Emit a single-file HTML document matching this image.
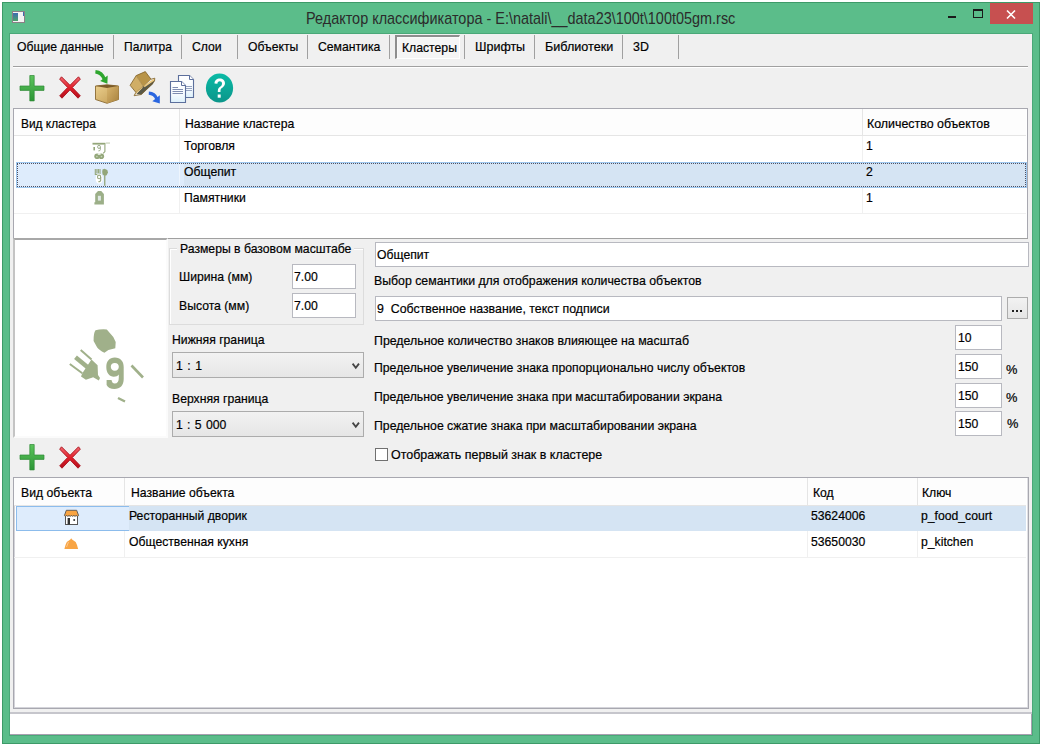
<!DOCTYPE html>
<html><head><meta charset="utf-8">
<style>
*{box-sizing:border-box;margin:0;padding:0}
html,body{width:1042px;height:746px;overflow:hidden;background:#fff}
body{position:relative;font-family:"Liberation Sans",sans-serif;font-size:12.2px;color:#000}
.a{position:absolute}
svg.a{overflow:visible}
.t{position:absolute;white-space:pre;line-height:14px;height:14px;transform-origin:0 0;-webkit-text-stroke:0.2px #000}
.sep{position:absolute;width:1px;background:#a0a0a0}
.hl{position:absolute;height:1px}
.vl{position:absolute;width:1px}
.inp{position:absolute;background:#fff;border:1px solid #b8b9c0}
.combo{position:absolute;border:1px solid #acacac;background:linear-gradient(#f2f2f2,#e6e6e6)}
</style></head><body>
<div class="a" style="left:2px;top:2px;width:1038px;height:742px;background:#5bbd8a;border:1px solid #3d9a68"></div>
<div class="a" style="left:12px;top:11px;width:13px;height:12px;background:#f4f4f4;border:1px solid #8a7f85"></div>
<div class="a" style="left:13px;top:13px;width:5px;height:8px;background:linear-gradient(#3d6bb0,#4aa36a)"></div>
<div class="a" style="left:23px;top:12px;width:1px;height:4px;background:#3d6bb0"></div>
<div class="t" style="left:306px;top:9px;font-size:16.4px;line-height:18px;height:18px;color:#2b2b2b;-webkit-text-stroke:0;transform:scaleX(0.881);transform-origin:0 0">Редактор классификатора - E:\natali\__data23\100t\100t05gm.rsc</div>
<div class="a" style="left:948px;top:16px;width:8px;height:2px;background:#1a1a1a"></div>
<div class="a" style="left:973px;top:9px;width:10px;height:9px;border:1px solid #1a1a1a;border-top-width:2px"></div>
<div class="a" style="left:990px;top:3px;width:43px;height:21px;background:#c75050"></div>
<svg class="a" style="left:1006px;top:10px" width="10" height="9" viewBox="0 0 10 9"><path d="M1 0.5L9 8.5M9 0.5L1 8.5" stroke="#fff" stroke-width="1.6"/></svg>
<div class="a" style="left:9px;top:33px;width:1024px;height:703px;border:1px solid #4aa878"></div>
<div class="a" style="left:10px;top:34px;width:1022px;height:701px;background:#f0f0f0"></div>
<div class="a" style="left:395px;top:35px;width:65px;height:24px;background:#f5f5f5;border:2px solid #fff;border-right-width:1px;border-bottom-width:1px;border-top-color:#8e8e8e;border-left-color:#8e8e8e;box-shadow:inset 1px 1px 0 #fafafa"></div>
<div class="t" style="left:17px;top:40.00px;font-size:13.0px;transform:scaleX(0.9385);">Общие данные</div>
<div class="sep" style="left:113px;top:35px;height:24px"></div>
<div class="t" style="left:124px;top:40.00px;font-size:13.0px;transform:scaleX(0.9231);">Палитра</div>
<div class="sep" style="left:181px;top:35px;height:24px"></div>
<div class="t" style="left:192px;top:40.00px;font-size:13.0px;transform:scaleX(0.9385);">Слои</div>
<div class="sep" style="left:237px;top:35px;height:24px"></div>
<div class="t" style="left:248px;top:40.00px;font-size:13.0px;transform:scaleX(0.9385);">Объекты</div>
<div class="sep" style="left:307px;top:35px;height:24px"></div>
<div class="t" style="left:318px;top:40.00px;font-size:13.0px;transform:scaleX(0.9385);">Семантика</div>
<div class="sep" style="left:389px;top:35px;height:24px"></div>
<div class="t" style="left:402px;top:41.00px;font-size:13.0px;transform:scaleX(0.9385);">Кластеры</div>
<div class="sep" style="left:464px;top:35px;height:24px"></div>
<div class="t" style="left:475px;top:40.00px;font-size:13.0px;transform:scaleX(0.9615);">Шрифты</div>
<div class="sep" style="left:534px;top:35px;height:24px"></div>
<div class="t" style="left:545px;top:40.00px;font-size:13.0px;transform:scaleX(0.9692);">Библиотеки</div>
<div class="sep" style="left:622px;top:35px;height:24px"></div>
<div class="t" style="left:633px;top:40.00px;font-size:13.0px;transform:scaleX(0.9538);">3D</div>
<div class="sep" style="left:678px;top:35px;height:24px"></div>
<div class="hl" style="left:13px;top:66px;width:1015px;background:#a0a0a0"></div>
<div class="hl" style="left:13px;top:67px;width:1015px;background:#fff"></div>
<svg class="a" style="left:18px;top:73px" width="28" height="30" viewBox="18 73 28 30">
<defs><linearGradient id="gp2075" x1="0" y1="0" x2="0" y2="1"><stop offset="0" stop-color="#5cc45c"/><stop offset="1" stop-color="#2c9636"/></linearGradient></defs>
<path d="M29.8 75.5H34.2V86H44V90.4H34.2V100.9H29.8V90.4H20V86H29.8Z" fill="url(#gp2075)" stroke="#2f8a36" stroke-width="0.7" stroke-linejoin="round"/>
</svg>
<svg class="a" style="left:59px;top:76px" width="22" height="23" viewBox="0 0 22 23">
<defs><linearGradient id="gx5976" x1="0" y1="0" x2="0" y2="1"><stop offset="0" stop-color="#f06a70"/><stop offset="0.5" stop-color="#e3202b"/><stop offset="1" stop-color="#b30f1c"/></linearGradient></defs>
<path d="M2.5 0.8L11 9.3L19.5 0.8L21.3 3.2L13.3 11.5L21.3 19.8L19 22.2L11 13.8L3 22.2L0.7 19.8L8.7 11.5L0.7 3.2Z" fill="url(#gx5976)" stroke="#a8101c" stroke-width="0.9" stroke-linejoin="round"/>
</svg>
<svg class="a" style="left:90px;top:68px" width="34" height="40" viewBox="90 68 34 40">
<defs><linearGradient id="bxl" x1="0" y1="0" x2="1" y2="1"><stop offset="0" stop-color="#ecd08e"/><stop offset="1" stop-color="#c09a52"/></linearGradient>
<linearGradient id="bxr" x1="0" y1="0" x2="1" y2="1"><stop offset="0" stop-color="#d8b46c"/><stop offset="1" stop-color="#a8823e"/></linearGradient></defs>
<path d="M95.5 86L107 84.8L118.5 86L118.5 99.5L107 103.3L95.5 99.5Z" fill="url(#bxl)" stroke="#8a6a32" stroke-width="0.9"/>
<path d="M107 88L118.5 86L118.5 99.5L107 103.3Z" fill="url(#bxr)"/>
<path d="M95.5 86L107 84.8L118.5 86L107 88Z" fill="#7a5a28"/>
<path d="M95.4 71.8Q102 72.5 104.5 79.5" fill="none" stroke="#2ea62e" stroke-width="3.4"/>
<path d="M100.2 81L107.7 75.4L107.4 83.8Z" fill="#2ea62e"/>
</svg>
<svg class="a" style="left:126px;top:68px" width="36" height="38" viewBox="126 68 36 38">
<path d="M130.1 85.3L136.2 75.6L143.3 86.3L135.9 92.4Z" fill="#d0ae66"/>
<path d="M136.2 75.6L145.3 71.6L151 79.2L143.3 86.3Z" fill="#b89448"/>
<path d="M143.3 86.3L154.8 79.5L153 84L141.3 94.8L136.5 94Z" fill="#585848"/>
<path d="M143.6 85.8L154.8 78.2L154.5 80.4L144.6 87.2Z" fill="#ecc97e"/>
<path d="M135.9 92.4L143.3 86.3L142 88.6L134.1 95.7Z" fill="#ecc97e"/>
<path d="M130.1 85.3L136.2 75.6L145.3 71.6L151 79.2L154.8 78.2L154.5 81.2L141.3 94.5L134.1 95.7L135.9 92.4Z" fill="none" stroke="#7f6026" stroke-width="0.8" stroke-linejoin="round"/>
<path d="M136.2 75.6L143.3 86.3L151 79.2M143.3 86.3L135.9 92.4" fill="none" stroke="#9a7a3a" stroke-width="0.6"/>
<path d="M148.8 93.2Q154.5 93.5 156.8 98.8" fill="none" stroke="#2a66e0" stroke-width="3.2"/>
<path d="M152.3 101.2L159.8 95.2L159.8 103.6Z" fill="#2a66e0"/>
</svg>
<svg class="a" style="left:169px;top:74px" width="27" height="31" viewBox="0 0 27 31">
<defs><linearGradient id="dc" x1="0" y1="0" x2="0" y2="1"><stop offset="0" stop-color="#ffffff"/><stop offset="0.6" stop-color="#f6fbff"/><stop offset="1" stop-color="#dcf0fb"/></linearGradient></defs>
<path d="M9.5 1.5H20.5L24.5 5.5V23.5H9.5Z" fill="url(#dc)" stroke="#5c6f9c" stroke-width="1.1"/>
<path d="M20.5 1.5V5.5H24.5" fill="#fff" stroke="#5c6f9c" stroke-width="1"/>
<path d="M17 12.5H23M17 14.5H23M17 16.5H23" stroke="#7c8cb0" stroke-width="0.8"/>
<path d="M1.5 7.5H12.5L16.5 11.5V28.5H1.5Z" fill="url(#dc)" stroke="#5c6f9c" stroke-width="1.1"/>
<path d="M12.5 7.5V11.5H16.5" fill="#fff" stroke="#5c6f9c" stroke-width="1"/>
<path d="M3.5 13.5H9M3.5 15.5H14M3.5 17.5H14M3.5 19.5H14" stroke="#7080a8" stroke-width="0.9"/>
</svg>
<svg class="a" style="left:205px;top:73px" width="30" height="31" viewBox="0 0 30 31">
<defs><linearGradient id="hp" x1="0" y1="0" x2="0" y2="1"><stop offset="0" stop-color="#0bbba6"/><stop offset="1" stop-color="#0b958a"/></linearGradient></defs>
<ellipse cx="14.5" cy="15" rx="13.6" ry="14.6" fill="url(#hp)"/>
<path d="M9.5 10.5C9.5 7 12 5.5 14.7 5.5C17.7 5.5 20 7.5 20 10.3C20 13 18 14.2 16.5 15.3C15.4 16.1 15.5 17 15.5 19H12.8C12.8 16.5 13 15.2 14.7 13.9C16.3 12.7 17 12 17 10.4C17 9 16 8.2 14.7 8.2C13.3 8.2 12.4 9.2 12.4 10.8Z" fill="#fff"/>
<rect x="12.7" y="21.5" width="3" height="3.2" fill="#fff"/>
</svg>
<div class="a" style="left:13px;top:108px;width:1015px;height:131px;background:#fff;border:1px solid #a8a8b0;border-bottom:none"></div>
<div class="hl" style="left:13px;top:238px;width:1015px;background:#a0a0a0"></div>
<div class="a" style="left:14px;top:109px;width:1012px;height:26px;background:#fdfdfd"></div>
<div class="hl" style="left:14px;top:135px;width:1012px;background:#e5e5e5"></div>
<div class="vl" style="left:179px;top:109px;height:26px;background:#e5e5e5"></div>
<div class="vl" style="left:862px;top:109px;height:26px;background:#e5e5e5"></div>
<div class="vl" style="left:179px;top:136px;height:78px;background:#f0f0f0"></div>
<div class="vl" style="left:862px;top:136px;height:78px;background:#f0f0f0"></div>
<div class="hl" style="left:14px;top:213px;width:1012px;background:#f0f0f0"></div>
<div class="a" style="left:16px;top:162px;width:1011px;height:26px;background:#d5e4f3;border:1px solid #9ec8f0"></div>
<div class="a" style="left:17px;top:163px;width:167px;height:24px;background:#deecfc"></div>
<div class="vl" style="left:179px;top:163px;height:24px;background:#eef5fd"></div>
<div class="a" style="left:17px;top:163px;width:1009px;height:24px;border:1px dotted #505060"></div>
<div class="t" style="left:21px;top:116.60px;font-size:13.0px;transform:scaleX(0.9154);">Вид кластера</div>
<div class="t" style="left:185px;top:116.60px;font-size:13.0px;transform:scaleX(0.9385);">Название кластера</div>
<div class="t" style="left:867px;top:116.60px;font-size:13.0px;transform:scaleX(0.9538);">Количество объектов</div>
<div class="t" style="left:184px;top:139.00px;font-size:13.0px;transform:scaleX(0.9385);">Торговля</div>
<div class="t" style="left:866px;top:139.00px;font-size:13.0px;transform:scaleX(0.9385);">1</div>
<div class="t" style="left:184px;top:165.20px;font-size:13.0px;transform:scaleX(0.9385);">Общепит</div>
<div class="t" style="left:866px;top:165.20px;font-size:13.0px;transform:scaleX(0.9385);">2</div>
<div class="t" style="left:184px;top:191.40px;font-size:13.0px;transform:scaleX(0.9385);">Памятники</div>
<div class="t" style="left:866px;top:191.40px;font-size:13.0px;transform:scaleX(0.9385);">1</div>
<div class="a" style="left:13px;top:238px;width:155px;height:200px;background:#fff;border:2px solid #fbfbfb;border-top-color:#a8a8a8;border-left-color:#c4c4c4"></div>
<div class="a" style="left:169px;top:248px;width:195px;height:77px;border:1px solid #dcdcdc;box-shadow:inset 1px 1px 0 #fff"></div>
<div class="a" style="left:177px;top:242px;width:177px;height:12px;background:#f0f0f0"></div>
<div class="t" style="left:180px;top:241.80px;font-size:13.0px;transform:scaleX(0.9385);">Размеры в базовом масштабе</div>
<div class="t" style="left:179px;top:269.80px;font-size:13.0px;transform:scaleX(0.9385);">Ширина (мм)</div>
<div class="t" style="left:179px;top:298.80px;font-size:13.0px;transform:scaleX(0.9385);">Высота (мм)</div>
<div class="inp" style="left:292px;top:264px;width:64px;height:25px"></div>
<div class="inp" style="left:292px;top:293px;width:64px;height:25px"></div>
<div class="t" style="left:294px;top:270.00px;font-size:13.0px;transform:scaleX(0.9385);">7.00</div>
<div class="t" style="left:294px;top:299.00px;font-size:13.0px;transform:scaleX(0.9385);">7.00</div>
<div class="t" style="left:172px;top:333.40px;font-size:13.0px;transform:scaleX(0.9385);">Нижняя граница</div>
<div class="t" style="left:172px;top:391.70px;font-size:13.0px;transform:scaleX(0.9385);">Верхняя граница</div>
<div class="combo" style="left:172px;top:352px;width:192px;height:26px"></div>
<svg class="a" style="left:351px;top:362px" width="10" height="8" viewBox="0 0 10 8"><path d="M1.6 1.6L4.8 5.8L8 1.6" fill="none" stroke="#454545" stroke-width="1.8"/></svg>
<div class="t" style="left:176px;top:359.40px;font-size:13.0px;transform:scaleX(0.9385);word-spacing:1.2px">1 : 1</div>
<div class="combo" style="left:172px;top:411px;width:192px;height:26px"></div>
<svg class="a" style="left:351px;top:421px" width="10" height="8" viewBox="0 0 10 8"><path d="M1.6 1.6L4.8 5.8L8 1.6" fill="none" stroke="#454545" stroke-width="1.8"/></svg>
<div class="t" style="left:176px;top:418.00px;font-size:13.0px;transform:scaleX(0.9385);word-spacing:1px">1 : 5 000</div>
<div class="inp" style="left:375px;top:242px;width:654px;height:25px"></div>
<div class="t" style="left:377px;top:248.00px;font-size:13.0px;transform:scaleX(0.9385);">Общепит</div>
<div class="t" style="left:374px;top:273.50px;font-size:13.0px;transform:scaleX(0.9462);">Выбор семантики для отображения количества объектов</div>
<div class="inp" style="left:375px;top:296px;width:627px;height:25px"></div>
<div class="t" style="left:377px;top:301.70px;font-size:13.0px;transform:scaleX(0.9500);">9  Собственное название, текст подписи</div>
<div class="a" style="left:1007px;top:297px;width:21px;height:22px;border:1px solid #acacac;background:linear-gradient(#f2f2f2,#e5e5e5)"></div>
<div class="a" style="left:1012px;top:310px;width:2px;height:2px;background:#202020"></div><div class="a" style="left:1016px;top:310px;width:2px;height:2px;background:#202020"></div><div class="a" style="left:1020px;top:310px;width:2px;height:2px;background:#202020"></div>
<div class="t" style="left:374px;top:333.50px;font-size:13.0px;transform:scaleX(0.9500);">Предельное количество знаков влияющее на масштаб</div>
<div class="t" style="left:374px;top:360.90px;font-size:13.0px;transform:scaleX(0.9415);">Предельное увеличение знака пропорционально числу объектов</div>
<div class="t" style="left:374px;top:390.00px;font-size:13.0px;transform:scaleX(0.9408);">Предельное увеличение знака при масштабировании экрана</div>
<div class="t" style="left:374px;top:419.20px;font-size:13.0px;transform:scaleX(0.9431);">Предельное сжатие знака при масштабировании экрана</div>
<div class="inp" style="left:955px;top:325px;width:47px;height:25px"></div>
<div class="t" style="left:958px;top:331.00px;font-size:13.0px;transform:scaleX(0.9385);">10</div>
<div class="inp" style="left:955px;top:354px;width:47px;height:25px"></div>
<div class="t" style="left:958px;top:360.00px;font-size:13.0px;transform:scaleX(0.9385);">150</div>
<div class="inp" style="left:955px;top:383px;width:47px;height:25px"></div>
<div class="t" style="left:958px;top:389.00px;font-size:13.0px;transform:scaleX(0.9385);">150</div>
<div class="inp" style="left:955px;top:411px;width:47px;height:25px"></div>
<div class="t" style="left:958px;top:417.00px;font-size:13.0px;transform:scaleX(0.9385);">150</div>
<div class="t" style="left:1006px;top:362.80px;font-size:13.0px;transform:scaleX(0.9846);">%</div>
<div class="t" style="left:1006px;top:391.00px;font-size:13.0px;transform:scaleX(0.9846);">%</div>
<div class="t" style="left:1007px;top:416.80px;font-size:13.0px;transform:scaleX(0.9846);">%</div>
<div class="a" style="left:375px;top:448px;width:13px;height:13px;border:1px solid #707070;background:#fff"></div>
<div class="t" style="left:391px;top:448.30px;font-size:13.0px;transform:scaleX(0.9577);">Отображать первый знак в кластере</div>
<svg class="a" style="left:18px;top:442px" width="28" height="30" viewBox="18 73 28 30">
<defs><linearGradient id="gp20444" x1="0" y1="0" x2="0" y2="1"><stop offset="0" stop-color="#5cc45c"/><stop offset="1" stop-color="#2c9636"/></linearGradient></defs>
<path d="M29.8 75.5H34.2V86H44V90.4H34.2V100.9H29.8V90.4H20V86H29.8Z" fill="url(#gp20444)" stroke="#2f8a36" stroke-width="0.7" stroke-linejoin="round"/>
</svg>
<svg class="a" style="left:59px;top:446px" width="22" height="23" viewBox="0 0 22 23">
<defs><linearGradient id="gx59446" x1="0" y1="0" x2="0" y2="1"><stop offset="0" stop-color="#f06a70"/><stop offset="0.5" stop-color="#e3202b"/><stop offset="1" stop-color="#b30f1c"/></linearGradient></defs>
<path d="M2.5 0.8L11 9.3L19.5 0.8L21.3 3.2L13.3 11.5L21.3 19.8L19 22.2L11 13.8L3 22.2L0.7 19.8L8.7 11.5L0.7 3.2Z" fill="url(#gx59446)" stroke="#a8101c" stroke-width="0.9" stroke-linejoin="round"/>
</svg>
<div class="a" style="left:13px;top:477px;width:1016px;height:232px;background:#fff;border:1px solid #a8a8b0;box-shadow:inset 1px 0 0 #d4d4da,inset 0 -1px 0 #d4d4da,inset -1px 0 0 #e0e0e4"></div>
<div class="a" style="left:14px;top:478px;width:1012px;height:27px;background:#fdfdfd"></div>
<div class="hl" style="left:14px;top:505px;width:1012px;background:#e5e5e5"></div>
<div class="vl" style="left:124px;top:478px;height:27px;background:#e5e5e5"></div>
<div class="vl" style="left:124px;top:506px;height:51px;background:#f0f0f0"></div>
<div class="vl" style="left:807px;top:478px;height:27px;background:#e5e5e5"></div>
<div class="vl" style="left:807px;top:506px;height:51px;background:#f0f0f0"></div>
<div class="vl" style="left:917px;top:478px;height:27px;background:#e5e5e5"></div>
<div class="vl" style="left:917px;top:506px;height:51px;background:#f0f0f0"></div>
<div class="hl" style="left:14px;top:557px;width:1012px;background:#f0f0f0"></div>
<div class="a" style="left:16px;top:506px;width:1010px;height:25px;background:#d5e4f3"></div>
<div class="a" style="left:16px;top:506px;width:113px;height:25px;background:#deecfc;border:1px solid #8cbcec;border-right:none"></div>
<div class="t" style="left:21px;top:486.10px;font-size:13.0px;transform:scaleX(0.9385);">Вид объекта</div>
<div class="t" style="left:131px;top:486.10px;font-size:13.0px;transform:scaleX(0.9385);">Название объекта</div>
<div class="t" style="left:813px;top:486.10px;font-size:13.0px;transform:scaleX(0.9385);">Код</div>
<div class="t" style="left:922px;top:486.10px;font-size:13.0px;transform:scaleX(0.9385);">Ключ</div>
<div class="t" style="left:129px;top:508.80px;font-size:13.0px;transform:scaleX(0.9385);">Ресторанный дворик</div>
<div class="t" style="left:811px;top:508.80px;font-size:13.0px;transform:scaleX(0.9385);">53624006</div>
<div class="t" style="left:921px;top:508.80px;font-size:13.0px;transform:scaleX(0.9385);">p_food_court</div>
<div class="t" style="left:129px;top:534.90px;font-size:13.0px;transform:scaleX(0.9385);">Общественная кухня</div>
<div class="t" style="left:811px;top:534.90px;font-size:13.0px;transform:scaleX(0.9385);">53650030</div>
<div class="t" style="left:921px;top:534.90px;font-size:13.0px;transform:scaleX(0.9385);">p_kitchen</div>
<div class="hl" style="left:10px;top:712px;width:1022px;height:2px;background:#c6c6cc"></div>
<div class="a" style="left:10px;top:714px;width:1022px;height:21px;background:#fff;border-right:1px solid #a8a0b0;border-bottom:1px solid #a8a0b0"></div>
<svg class="a" style="left:90px;top:140px" width="22" height="22" viewBox="90 140 22 22">
<rect x="92.5" y="142.8" width="13" height="1.8" fill="#94a77a"/>
<rect x="106" y="142.5" width="4" height="1.1" fill="#c4d0b4"/>
<path d="M104.9 144.5V151.6L103.2 153.4" fill="none" stroke="#94a77a" stroke-width="1.1"/>
<rect x="93.4" y="147" width="1.6" height="3.4" fill="#94a77a"/>
<ellipse cx="99" cy="146.9" rx="1.4" ry="1.6" fill="none" stroke="#a0b090" stroke-width="1"/><path d="M100.4 147V149.6Q100.4 150.9 98.4 150.9" fill="none" stroke="#a0b090" stroke-width="1"/>
<circle cx="97.1" cy="156.3" r="2.8" fill="#94a77a"/><circle cx="101.3" cy="156.3" r="2.8" fill="#94a77a"/><rect x="97.8" y="153.6" width="2.8" height="1.4" fill="#e0e8d8"/>
<circle cx="96.9" cy="156.6" r="0.8" fill="#c8d4bc"/><circle cx="101.5" cy="156.6" r="0.8" fill="#c8d4bc"/>
</svg>
<svg class="a" style="left:90px;top:166px" width="22" height="22" viewBox="90 166 22 22">
<path d="M95.3 169V174.5H100V169M96.9 169V173.5M98.4 169V173.5" fill="none" stroke="#94a77a" stroke-width="1.1"/>
<ellipse cx="99.2" cy="178.8" rx="3.6" ry="5" fill="#ffffff"/>
<ellipse cx="99.1" cy="176.9" rx="1.6" ry="1.8" fill="none" stroke="#98a880" stroke-width="1.1"/><path d="M100.7 177V180Q100.7 181.8 98.3 181.8" fill="none" stroke="#98a880" stroke-width="1.1"/>
<path d="M102.5 169.5L104.5 168.8L107.3 170L108 172.5L106.6 175.3L104.6 176L102.6 174.5L102.2 172Z" fill="#94a77a"/>
<rect x="104.1" y="175.5" width="1.3" height="10.3" fill="#94a77a"/>
</svg>
<svg class="a" style="left:92px;top:189px" width="14" height="17" viewBox="92 189 14 17">
<path d="M98 190.9H101.2L103.9 194.1V204.4H94.4V202.2H95.2V194.1Z" fill="#9caf88"/>
<rect x="97.9" y="195.8" width="3" height="4.8" fill="#dfe8e4"/>
</svg>
<svg class="a" style="left:60px;top:320px" width="95" height="90" viewBox="60 320 95 90">
<path d="M95.5 330.2Q100 329 106.8 329.4L113.3 337L115.7 341.9L115.3 348.3L108.4 350L104.4 352.8Q99 350 97.2 347.5L93.6 341.1Q93.4 333 95.5 330.2Z" fill="#a0b08a"/>
<path d="M69.8 364L82.3 373.3" stroke="#a0b08a" stroke-width="2"/>
<path d="M80.7 350L91.5 359.6" stroke="#a0b08a" stroke-width="2"/>
<path d="M75.5 357.2L88.5 368" stroke="#a0b08a" stroke-width="4.4"/>
<path d="M82.3 373.3L91.5 359.6L97.6 365.2L98 374.9L100 378L98.8 380.5L93.2 377.3L85.9 379.7L81 376.5Z" fill="#a0b08a"/>
<path d="M131.5 365.5L143 377.5" stroke="#a0b08a" stroke-width="2.6"/>
<path d="M118 398L125 401.5" stroke="#a0b08a" stroke-width="2.4"/>
<path fill-rule="evenodd" fill="#a0b08a" d="M114.8 357.6C120.5 357.6 123.7 361.5 123.7 367L123.7 379C123.7 385.5 120 389 114.5 389C110.5 389 108 387.5 106.6 385L106.6 380L111.5 380C112 382.5 113 383.5 114.6 383.5C117.5 383.5 118.8 381.5 118.8 377.5L118.8 374.5C117.7 376 116 376.7 113.8 376.7C109.5 376.7 106.3 373 106.3 367C106.3 361.5 109.3 357.6 114.8 357.6ZM114.8 363C112.2 363 110.8 364.6 110.8 366.8C110.8 369.2 112.2 370.7 114.8 370.7C117.4 370.7 118.8 369.2 118.8 366.8C118.8 364.6 117.4 363 114.8 363Z"/>
</svg>
<svg class="a" style="left:62px;top:508px" width="19" height="19" viewBox="62 508 19 19">
<rect x="65.5" y="515.5" width="12" height="9" fill="#fff" stroke="#555" stroke-width="1"/>
<rect x="67.6" y="518" width="2.4" height="6.5" fill="#333"/>
<circle cx="74.2" cy="520" r="1" fill="#333"/>
<path d="M66.3 510.3H76.7L78.6 515.6Q77.4 517 76.2 515.6Q75 517 73.8 515.6Q72.6 517 71.4 515.6Q70.2 517 69 515.6Q67.8 517 66.6 515.6Q65.4 517 64.4 515.6Z" fill="#f9a442" stroke="#555" stroke-width="0.9"/>
</svg>
<svg class="a" style="left:62px;top:536px" width="19" height="15" viewBox="62 536 19 15">
<path d="M64.4 549L65.5 545Q67 541 70.3 539.6L71.2 538.2L72.1 539.6Q75.5 541 77 545L78.1 549Z" fill="#f8a545"/>
<path d="M66.5 547L68.5 542" stroke="#fcd0a0" stroke-width="0.8"/>
</svg>


</body></html>
